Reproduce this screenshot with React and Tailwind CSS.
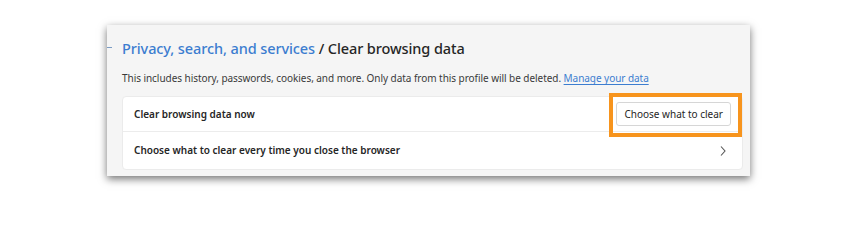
export default function App() {
  return (
    <div className="w-[857px] h-[201px] bg-white pt-[25px] pl-[107px] font-['Noto_Sans',sans-serif]">
      <div className="relative w-[643px] h-[151px] bg-[#f5f5f5] shadow-[0_3px_8px_rgba(0,0,0,0.55)] pl-[15px] pr-[7px] pt-[13px]">
        {/* cropped tab marker */}
        <div className="absolute left-0 top-[22px] w-[5px] h-[1px] bg-[#7b9cc4]" />

        <h1 className="text-[14.5px] leading-[20px] font-medium tracking-[-0.1px] text-[#262626]">
          <span className="text-[#3c7dd0]">Privacy, search, and services</span> / Clear browsing data
        </h1>

        <p className="mt-[13px] text-[10px] leading-[14px] tracking-[-0.05px] text-[#3a3a3a]">
          This includes history, passwords, cookies, and more. Only data from this profile will be deleted.{" "}
          <span className="text-[#3c7dd0] underline underline-offset-2">Manage your data</span>
        </p>

        <div className="mt-[11px] w-[621px] bg-white rounded-[4px] border border-[#ebebeb] text-[10px] text-[#262626] font-semibold">
          <div className="relative h-[35px] flex items-center justify-between pl-[11px] pr-[11px] border-b border-[#ececec]">
            <span>Clear browsing data now</span>
            <button className="h-[24px] px-[7px] bg-white border border-[#d6d6d6] rounded-[3px] font-normal text-[10px] text-[#262626]">
              Choose what to clear
            </button>
            {/* highlight */}
            <div className="absolute right-[0px] top-[-4px] w-[133px] h-[44px] border-[4px] border-[#f7941d]" />
          </div>
          <div className="h-[37px] flex items-center justify-between pl-[11px] pr-[15px]">
            <span>Choose what to clear every time you close the browser</span>
            <svg width="8" height="12" viewBox="0 0 8 12" fill="none" stroke="#555" strokeWidth="1.1">
              <path d="M2 1.5 L6 6 L2 10.5" />
            </svg>
          </div>
        </div>
      </div>
    </div>
  );
}
